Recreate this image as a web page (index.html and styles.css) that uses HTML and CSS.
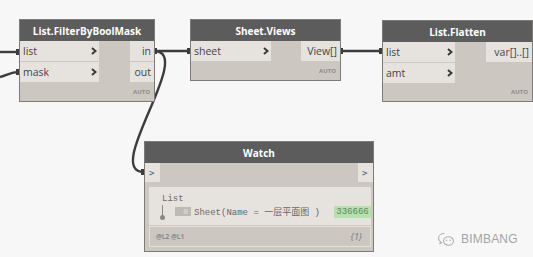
FILE: index.html
```html
<!DOCTYPE html>
<html lang="zh">
<head>
    <meta charset="UTF-8">
    <title>Dynamo graph</title>
    <link rel="stylesheet" href="styles.css">
</head>
<body>

<div class="canvas">

    <!-- Провода -->
    <svg class="wires" width="533" height="257" viewBox="0 0 533 257">
        <g fill="none" stroke="#3c3c3c" stroke-width="2.4">
            <path d="M0 52 L19 52"/>
            <path d="M0 77 C8 75, 10 72, 19 72"/>
            <path d="M154 51 L190 51"/>
            <path d="M154 51 C196 51, 102 172, 144 172"/>
            <path d="M340 51 L382 51"/>
        </g>
        <g fill="#3c3c3c">
            <rect x="16" y="49" width="3" height="6"/>
            <rect x="16" y="69" width="3" height="6"/>
            <rect x="154" y="48" width="3" height="6"/>
            <rect x="187" y="48" width="3" height="6"/>
            <rect x="340" y="48" width="3" height="6"/>
            <rect x="379" y="48" width="3" height="6"/>
            <rect x="141" y="169" width="3" height="6"/>
            <rect x="532" y="48" width="2" height="6"/>
        </g>
    </svg>

    <!-- List.FilterByBoolMask -->
    <div class="node node-filter">
        <div class="node-header">List.FilterByBoolMask</div>
        <div class="node-ports">
            <div class="inputs">
                <div class="port in-port">list <svg class="chev" width="6" height="8" viewBox="0 0 6 8"><path d="M1 1 L4.5 4 L1 7"/></svg></div>
                <div class="port in-port">mask <svg class="chev" width="6" height="8" viewBox="0 0 6 8"><path d="M1 1 L4.5 4 L1 7"/></svg></div>
            </div>
            <div class="outputs">
                <div class="port out-port">in</div>
                <div class="port out-port">out</div>
            </div>
        </div>
        <div class="node-foot">AUTO</div>
    </div>

    <!-- Sheet.Views -->
    <div class="node node-views">
        <div class="node-header">Sheet.Views</div>
        <div class="node-ports">
            <div class="inputs">
                <div class="port in-port">sheet <svg class="chev" width="6" height="8" viewBox="0 0 6 8"><path d="M1 1 L4.5 4 L1 7"/></svg></div>
            </div>
            <div class="outputs">
                <div class="port out-port">View[]</div>
            </div>
        </div>
        <div class="node-foot">AUTO</div>
    </div>

    <!-- List.Flatten -->
    <div class="node node-flatten">
        <div class="node-header">List.Flatten</div>
        <div class="node-ports">
            <div class="inputs">
                <div class="port in-port">list <svg class="chev" width="6" height="8" viewBox="0 0 6 8"><path d="M1 1 L4.5 4 L1 7"/></svg></div>
                <div class="port in-port">amt <svg class="chev" width="6" height="8" viewBox="0 0 6 8"><path d="M1 1 L4.5 4 L1 7"/></svg></div>
            </div>
            <div class="outputs">
                <div class="port out-port">var[]..[]</div>
            </div>
        </div>
        <div class="node-foot">AUTO</div>
    </div>

    <!-- Watch -->
    <div class="node node-watch">
        <div class="node-header">Watch</div>
        <div class="watch-ports">
            <div class="mini-port">&gt;</div>
            <div class="mini-port">&gt;</div>
        </div>
        <div class="watch-box">
            <div class="watch-list">List</div>
            <div class="watch-item">
                <div class="tree-line"></div>
                <span class="idx">0</span>
                <span class="val">Sheet(Name = 一层平面图 )</span>
                <span class="id-tag">336666</span>
            </div>
        </div>
        <div class="watch-foot">
            <span class="levels">@L2 @L1</span>
            <span class="count">{1}</span>
        </div>
    </div>

    <!-- Водяной знак -->
    <div class="watermark">
        <svg width="18" height="16" viewBox="0 0 18 16">
            <g fill="none" stroke="#b0b0b0" stroke-width="1.1">
                <path d="M7.5 2.5 C4 2.5 1.5 4.6 1.5 7.2 C1.5 8.6 2.3 9.8 3.5 10.6 L3 12.5 L5.2 11.4"/>
                <ellipse cx="11.5" cy="10" rx="5" ry="4.2"/>
            </g>
            <g fill="#b0b0b0">
                <circle cx="9.6" cy="9.2" r="0.8"/>
                <circle cx="13.2" cy="9.2" r="0.8"/>
            </g>
        </svg>
        <span>BIMBANG</span>
    </div>

</div>

</body>
</html>
```

FILE: styles.css
```css
body {
    margin: 0;
    background-color: #f7f7f7;
    font-family: "Open Sans", "Noto Sans CJK SC", sans-serif;
}
.canvas {
    position: relative;
    width: 533px;
    height: 257px;
    overflow: hidden;
}
.wires {
    position: absolute;
    left: 0;
    top: 0;
}

/* Узлы */
.node {
    position: absolute;
    box-sizing: border-box;
    background: #ccc8c1;
    border: 1px solid #7d7b78;
    display: flex;
    flex-direction: column;
}
.node-header {
    height: 21px;
    background: #5c5c5c;
    color: #fff;
    font-size: 10px;
    font-weight: bold;
    display: flex;
    align-items: center;
    justify-content: center;
}
.node-ports {
    display: flex;
    justify-content: space-between;
}
.inputs,
.outputs {
    display: flex;
    flex-direction: column;
    gap: 1px;
}
.port {
    height: 20px;
    background: #e6e3de;
    color: #454545;
    font-size: 10.5px;
    display: flex;
    align-items: center;
    box-sizing: border-box;
}
.in-port {
    justify-content: space-between;
    padding: 0 2px 0 3px;
}
.out-port {
    justify-content: flex-end;
    padding: 0 3px 0 4px;
}
.chev {
    fill: none;
    stroke: #3a3a3a;
    stroke-width: 2;
}
.node-foot {
    flex: 1;
    display: flex;
    align-items: center;
    justify-content: flex-end;
    padding-right: 4px;
    font-size: 6px;
    font-weight: bold;
    color: #8c8a86;
}

.node-filter { left: 19px; top: 19px; width: 136px; height: 83px; }
.node-filter .inputs { width: 79px; }
.node-filter .outputs { width: 24px; }

.node-views { left: 190px; top: 19px; width: 151px; height: 62px; }
.node-views .inputs { width: 80px; }
.node-views .outputs { width: 39px; }

.node-flatten { left: 382px; top: 20px; width: 151px; height: 82px; }
.node-flatten .inputs { width: 72px; }
.node-flatten .outputs { width: 46px; }

/* Watch */
.node-watch { left: 144px; top: 141px; width: 230px; height: 111px; }
.watch-ports {
    display: flex;
    justify-content: space-between;
}
.mini-port {
    width: 15px;
    height: 19px;
    background: #e6e3de;
    color: #3f5a80;
    font-size: 9px;
    font-family: "DejaVu Sans Mono", monospace;
    display: flex;
    align-items: center;
    padding-left: 4px;
    box-sizing: border-box;
}
.watch-box {
    margin: 5px 2px 0 4px;
    height: 38px;
    background: #e6e3de;
    font-family: "Liberation Mono", "Noto Sans CJK SC", monospace;
    font-size: 9px;
    color: #6a6866;
    padding: 7px 0 0 13px;
    box-sizing: border-box;
}
.watch-list {
    line-height: 10px;
}
.watch-item {
    display: flex;
    align-items: center;
    height: 13px;
    margin-top: 1px;
}
.tree-line {
    width: 1px;
    height: 13px;
    background: #8a8886;
    margin-right: 12px;
    position: relative;
}
.tree-line::after {
    content: "";
    position: absolute;
    left: -2px;
    bottom: -2px;
    width: 5px;
    height: 5px;
    border-radius: 50%;
    background: #8a8886;
}
.idx {
    width: 16px;
    height: 9px;
    line-height: 9px;
    background: #bdbab5;
    color: #e6e3de;
    font-size: 8px;
    text-align: right;
    padding-right: 3px;
    box-sizing: border-box;
    margin-right: 3px;
}
.val {
    flex: 1;
    white-space: nowrap;
}
.id-tag {
    background: #b6e0ae;
    color: #5b8a5f;
    width: 37px;
    height: 12px;
    line-height: 12px;
    text-align: center;
}
.watch-foot {
    margin: 1px 2px 0 4px;
    height: 21px;
    border: 1px solid #e4e1dc;
    box-sizing: border-box;
    display: flex;
    align-items: center;
    justify-content: space-between;
    padding: 0 8px 0 6px;
}
.levels {
    font-size: 6.5px;
    font-weight: bold;
    color: #8a8886;
}
.count {
    font-size: 9px;
    font-style: italic;
    color: #7a7876;
}

/* Водяной знак */
.watermark {
    position: absolute;
    left: 437px;
    top: 231px;
    display: flex;
    align-items: center;
    gap: 6px;
    color: #a4a4a4;
    font-family: "Liberation Sans", sans-serif;
    font-size: 12px;
    letter-spacing: 0.2px;
}
```
